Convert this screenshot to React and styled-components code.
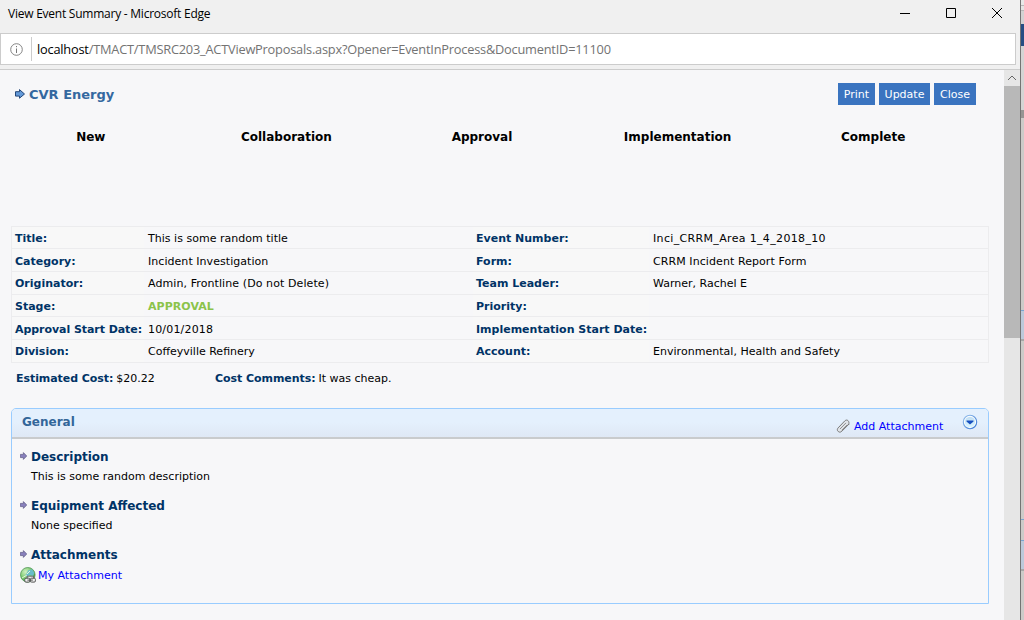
import React from "react";
import styled, { createGlobalStyle } from "styled-components";

const GlobalStyle = createGlobalStyle`
  * { box-sizing: border-box; }
  body { margin: 0; overflow: hidden; background: #f0f0f0; }
`;

const Desktop = styled.div`
  display: flex;
  width: 1024px;
  height: 620px;
  overflow: hidden;
  font-family: Verdana, "DejaVu Sans", sans-serif;
  font-size: 11px;
  color: #000;
`;

const Window = styled.div`
  display: flex;
  flex-direction: column;
  width: 1021px;
  height: 620px;
  background: #f0f0f0;
  border-right: 1px solid #747474;
`;

const TitleBar = styled.header`
  display: flex;
  justify-content: space-between;
  height: 33px;
  padding-left: 8px;
  font-family: "Segoe UI", "Open Sans", sans-serif;
`;

const WindowTitle = styled.div`
  font-size: 12px;
  line-height: 27px;
  letter-spacing: -0.24px;
  white-space: nowrap;
`;

const WindowButtons = styled.div`
  display: flex;
`;

const WindowButton = styled.div`
  width: 46px;
  height: 26px;
  padding: 7px 0 0 17px;
  svg { display: block; }
`;

const AddressBar = styled.div`
  display: flex;
  align-items: center;
  width: 1016px;
  height: 32px;
  background: #fff;
  border: 1px solid #ccc;
  font-family: "Segoe UI", "Open Sans", sans-serif;
  font-size: 12.8px;
`;

const InfoSlot = styled.div`
  display: flex;
  width: 31px;
  height: 24px;
  padding-left: 9px;
  align-items: center;
  border-right: 1px solid #ccc;
`;

const Url = styled.div`
  padding-left: 5px;
  color: #737373;
  letter-spacing: -0.215px;
  white-space: nowrap;
  span { color: #000; }
`;

const Viewport = styled.div`
  display: flex;
  flex: 1;
  margin-top: 4px;
  border-top: 1px solid #ccc;
  min-height: 0;
`;

const Page = styled.main`
  width: 1004px;
  padding: 13px 15px 0 11px;
  background: #f7f7f9;
  overflow: hidden;
`;

const Scrollbar = styled.div`
  width: 16px;
  background: #e6e6e6;
`;

const ScrollArrow = styled.div`
  height: 16px;
  padding: 4px 0 0 3px;
  svg { display: block; }
`;

const ScrollThumb = styled.div`
  height: 252px;
  background: #b8b8b8;
`;

const PageHeader = styled.div`
  display: flex;
  align-items: center;
  height: 22px;
  padding: 0 13px 0 4px;
`;

const Company = styled.h1`
  flex: 1;
  margin: 0 0 0 4px;
  padding-top: 1px;
  font-size: 13px;
  line-height: 21px;
  color: #3468a0;
`;

const Toolbar = styled.div`
  display: flex;
  gap: 4px;
`;

const Button = styled.button`
  width: ${(p) => p.$width}px;
  height: 22px;
  padding: 1px 0 0;
  border: 0;
  background: #3a74c0;
  color: #fff;
  font: 11px/21px Verdana, "DejaVu Sans", sans-serif;
`;

const Stages = styled.div`
  display: grid;
  grid-template-columns: repeat(5, 195.6px);
  height: 121px;
  margin-left: -18px;
  padding-top: 22px;
`;

const Stage = styled.div`
  font-size: 12px;
  font-weight: bold;
  line-height: 20px;
  text-align: center;
`;

const Details = styled.div`
  width: 978px;
  border: 1px solid #ececee;
`;

const DetailRow = styled.div`
  display: grid;
  grid-template-columns: 132px 329px 176px 339px;
  height: ${(p) => p.$height}px;
  line-height: 18px;
  & + & { border-top: 1px solid #ececee; }
  > * { padding-top: ${(p) => p.$top}px; }
`;

const Label = styled.div`
  padding-left: 3px;
  background: #f8f8f8;
  color: #003366;
  font-weight: bold;
  letter-spacing: ${(p) => p.$spacing || 0}px;
  white-space: nowrap;
`;

const Value = styled.div`
  padding-left: 4px;
  letter-spacing: ${(p) => p.$spacing || 0}px;
  white-space: nowrap;
`;

const StageValue = styled.b`
  color: #8bc34a;
`;

const Costs = styled.div`
  display: flex;
  height: 45px;
  padding: 6px 0 0 5px;
  line-height: 20px;
`;

const Cost = styled.div`
  display: flex;
  gap: 3px;
  width: ${(p) => p.$width}px;
  white-space: nowrap;
`;

const CostLabel = styled.b`
  color: #003366;
  letter-spacing: -0.06px;
`;

const Panel = styled.section`
  width: 978px;
  height: 196px;
  border: 1px solid #99ccff;
  border-radius: 5px 5px 0 0;
`;

const PanelHeader = styled.div`
  display: flex;
  height: 30px;
  padding-left: 10px;
  border-bottom: 2px solid #c9cbcd;
  border-radius: 4px 4px 0 0;
  background: linear-gradient(#e4f0fd 0%, #e4f0fd 48%, #dfe8f5 100%);
`;

const PanelTitle = styled.h2`
  flex: 1;
  margin: 0;
  font-size: 12px;
  line-height: 26px;
  color: #336699;
`;

const AddLink = styled.a`
  display: flex;
  width: 126px;
  padding-top: 9px;
  gap: 4px;
  color: #0000ff;
  line-height: 18px;
  white-space: nowrap;
  svg { margin-top: 1px; }
`;

const Toggle = styled.div`
  padding: 5px 10px 0 0;
`;

const PanelBody = styled.div`
  padding: 8px 8px 0;
`;

const Item = styled.div`
  height: 49px;
`;

const ItemTitle = styled.h3`
  display: flex;
  gap: 4px;
  margin: 0;
  font-size: 12px;
  line-height: 20px;
  color: #003366;
  svg { margin-top: 5px; }
`;

const ItemText = styled.div`
  padding-left: 11px;
  line-height: 20px;
`;

const Attachment = styled.a`
  display: flex;
  align-items: center;
  gap: 2px;
  height: 20px;
  color: #0000ff;
`;

const Backdrop = styled.div`
  width: 3px;
  height: 620px;
  background: #cdcbc9;
`;

const Slice = styled.div`
  height: ${(p) => p.$height}px;
  background: ${(p) => p.$color};
`;

const InfoIcon = () => (
  <svg width="13" height="13" viewBox="0 0 13 13" fill="none" stroke="#777">
    <circle cx="6.5" cy="6.5" r="5.8" strokeWidth=".9" />
    <path d="M6.5 5.5v4.5M6.5 3v1.2" />
  </svg>
);

const BlueArrow = () => (
  <svg width="10" height="10" viewBox="0 0 10 10">
    <path d="M.5 2.7h4V.6L9.5 5 4.5 9.2V7.1h-4z" fill="#6399d8" stroke="#244779" />
  </svg>
);

const SmallArrow = () => (
  <svg width="7" height="8" viewBox="0 0 7 8">
    <path d="M.4 2.4h3V.6L6.7 4 3.4 7.4V5.6h-3z" fill="#8880bd" stroke="#66618d" strokeWidth=".8" />
  </svg>
);

const ClipIcon = () => (
  <svg width="14" height="14" viewBox="0 0 14 14" fill="none" strokeLinecap="round" strokeLinejoin="round">
    <path d="M4.2 9.9l5.4-5.4M9.6 4.5c1-1 2 .1 1.1 1.1l-5.3 5.5c-1 1-2.5-.4-1.4-1.5M4 9.6" stroke="#8a8a8a" strokeWidth=".9" />
    <path d="M12.7 5.4l-6.9 6.9c-2.5 2.4-6-.9-3.7-3.4l6.7-7c2.4-2.3 5.2.6 3.9 3.5z" fill="#e1e5ea" stroke="#777" strokeWidth="1" />
    <path d="M4.2 9.8l5.5-5.6M6 11l5-5" stroke="#858585" strokeWidth=".9" />
  </svg>
);

const ToggleIcon = () => (
  <svg width="16" height="16" viewBox="0 0 16 16">
    <defs>
      <linearGradient id="toggleFill" x2="0" y2="1">
        <stop stopColor="#c1def3" /><stop offset="1" stopColor="#d9f5ff" />
      </linearGradient>
      <linearGradient id="toggleRim" x2="1" y2="1">
        <stop stopColor="#9bc4ed" /><stop offset="1" stopColor="#3475d4" />
      </linearGradient>
    </defs>
    <circle cx="8" cy="8" r="6.7" fill="#fff" stroke="url(#toggleRim)" strokeWidth="1.1" />
    <circle cx="8" cy="8" r="5.2" fill="url(#toggleFill)" />
    <path d="M4.5 6.5h7v1L8 10.5l-3.5-3z" fill="#164fc0" />
  </svg>
);

const GlobeIcon = () => (
  <svg width="16" height="16" viewBox="0 0 16 16">
    <defs>
      <radialGradient id="globe" cx=".35" cy=".3" r=".75">
        <stop stopColor="#d0f0c4" /><stop offset=".55" stopColor="#7ecb70" /><stop offset="1" stopColor="#399444" />
      </radialGradient>
    </defs>
    <circle cx="7.8" cy="7.8" r="7.3" fill="url(#globe)" stroke="#509656" strokeWidth=".8" />
    <path d="M8 3.4l4.1-1.1 2.2 3.4-1.2 3.5-3.4-1.1-1.8 1.3-3-.4 2.2-3.3z" fill="#68bdc9" />
    <path d="M2 11l5-3M7 7l3-3" stroke="#e3f6d9" />
    <rect x="7.2" y="9.2" width="6.4" height="3" fill="#e8e8e8" stroke="#666" strokeWidth=".9" />
    <rect x="4.8" y="11.2" width="5" height="3.9" rx="1.2" fill="#eee" stroke="#555" />
    <rect x="10.4" y="11.2" width="5" height="3.9" rx="1.2" fill="#eee" stroke="#555" />
    <path d="M7.4 13.1h5.4" stroke="#555" />
  </svg>
);

const stages = ["New", "Collaboration", "Approval", "Implementation", "Complete"];

const details = [
  { h: 21, top: 3, left: ["Title:", "This is some random title", 0.02], right: ["Event Number:", "Inci_CRRM_Area 1_4_2018_10", 0.34] },
  { h: 23, top: 4, left: ["Category:", "Incident Investigation", 0.05], right: ["Form:", "CRRM Incident Report Form", 0.08] },
  { h: 23, top: 3, left: ["Originator:", "Admin, Frontline (Do not Delete)", 0.09], right: ["Team Leader:", "Warner, Rachel E", 0] },
  { h: 22, top: 3, left: ["Stage:", <StageValue>APPROVAL</StageValue>, 0.05], right: ["Priority:", "", 0] },
  { h: 23, top: 4, left: ["Approval Start Date:", "10/01/2018", 0.18, -0.06], right: ["Implementation Start Date:", "", 0] },
  { h: 23, top: 3, left: ["Division:", "Coffeyville Refinery", 0], right: ["Account:", "Environmental, Health and Safety", 0.03] },
];

const backdrop = [
  [5, "#e8e8e8"], [1, "#b8b8b8"], [4, "#e4e4e4"], [1, "#b8b8b8"], [13, "#d2d2d2"],
  [22, "#264d83"], [64, "#d4d4d4"], [8, "#969493"], [192, "#cdcbc9"], [1, "#7aa5d0"],
  [28, "#bcc9da"], [2, "#a8a8a8"], [178, "#cdcbc9"], [1, "#7aa5d0"], [20, "#cdcbc9"],
  [1, "#7aa5d0"], [28, "#bcc9da"], [2, "#a8a8a8"],
];

export default function App() {
  return (
    <Desktop>
      <GlobalStyle />
      <Window>
        <TitleBar>
          <WindowTitle>View Event Summary - Microsoft Edge</WindowTitle>
          <WindowButtons>
            <WindowButton><svg width="12" height="12"><path d="M1 6.5h10" stroke="#000" /></svg></WindowButton>
            <WindowButton><svg width="12" height="12"><path d="M1.5 1.5h9v9h-9z" fill="none" stroke="#000" /></svg></WindowButton>
            <WindowButton><svg width="12" height="12"><path d="M1 1l10 10M11 1L1 11" stroke="#000" /></svg></WindowButton>
          </WindowButtons>
        </TitleBar>
        <AddressBar>
          <InfoSlot><InfoIcon /></InfoSlot>
          <Url><span>localhost</span>/TMACT/TMSRC203_ACTViewProposals.aspx?Opener=EventInProcess&amp;DocumentID=11100</Url>
        </AddressBar>
        <Viewport>
          <Page>
            <PageHeader>
              <BlueArrow />
              <Company>CVR Energy</Company>
              <Toolbar>
                <Button $width={37}>Print</Button>
                <Button $width={51}>Update</Button>
                <Button $width={42}>Close</Button>
              </Toolbar>
            </PageHeader>
            <Stages>
              {stages.map((name) => <Stage key={name}>{name}</Stage>)}
            </Stages>
            <Details>
              {details.map(({ h, top, left, right }) => (
                <DetailRow key={left[0]} $height={h} $top={top}>
                  <Label $spacing={left[3]}>{left[0]}</Label>
                  <Value $spacing={left[2]}>{left[1]}</Value>
                  <Label>{right[0]}</Label>
                  <Value $spacing={right[2]}>{right[1]}</Value>
                </DetailRow>
              ))}
            </Details>
            <Costs>
              <Cost $width={199}><CostLabel>Estimated Cost:</CostLabel>$20.22</Cost>
              <Cost $width={200}><CostLabel>Cost Comments:</CostLabel>It was cheap.</Cost>
            </Costs>
            <Panel>
              <PanelHeader>
                <PanelTitle>General</PanelTitle>
                <AddLink><ClipIcon />Add Attachment</AddLink>
                <Toggle><ToggleIcon /></Toggle>
              </PanelHeader>
              <PanelBody>
                <Item>
                  <ItemTitle><SmallArrow />Description</ItemTitle>
                  <ItemText>This is some random description</ItemText>
                </Item>
                <Item>
                  <ItemTitle><SmallArrow />Equipment Affected</ItemTitle>
                  <ItemText>None specified</ItemText>
                </Item>
                <Item>
                  <ItemTitle><SmallArrow />Attachments</ItemTitle>
                  <Attachment><GlobeIcon />My Attachment</Attachment>
                </Item>
              </PanelBody>
            </Panel>
          </Page>
          <Scrollbar>
            <ScrollArrow><svg width="10" height="8"><path d="M1 6l4-4 4 4" fill="none" stroke="#666" /></svg></ScrollArrow>
            <ScrollThumb />
          </Scrollbar>
        </Viewport>
      </Window>
      <Backdrop>
        {backdrop.map(([height, color], i) => <Slice key={i} $height={height} $color={color} />)}
      </Backdrop>
    </Desktop>
  );
}
